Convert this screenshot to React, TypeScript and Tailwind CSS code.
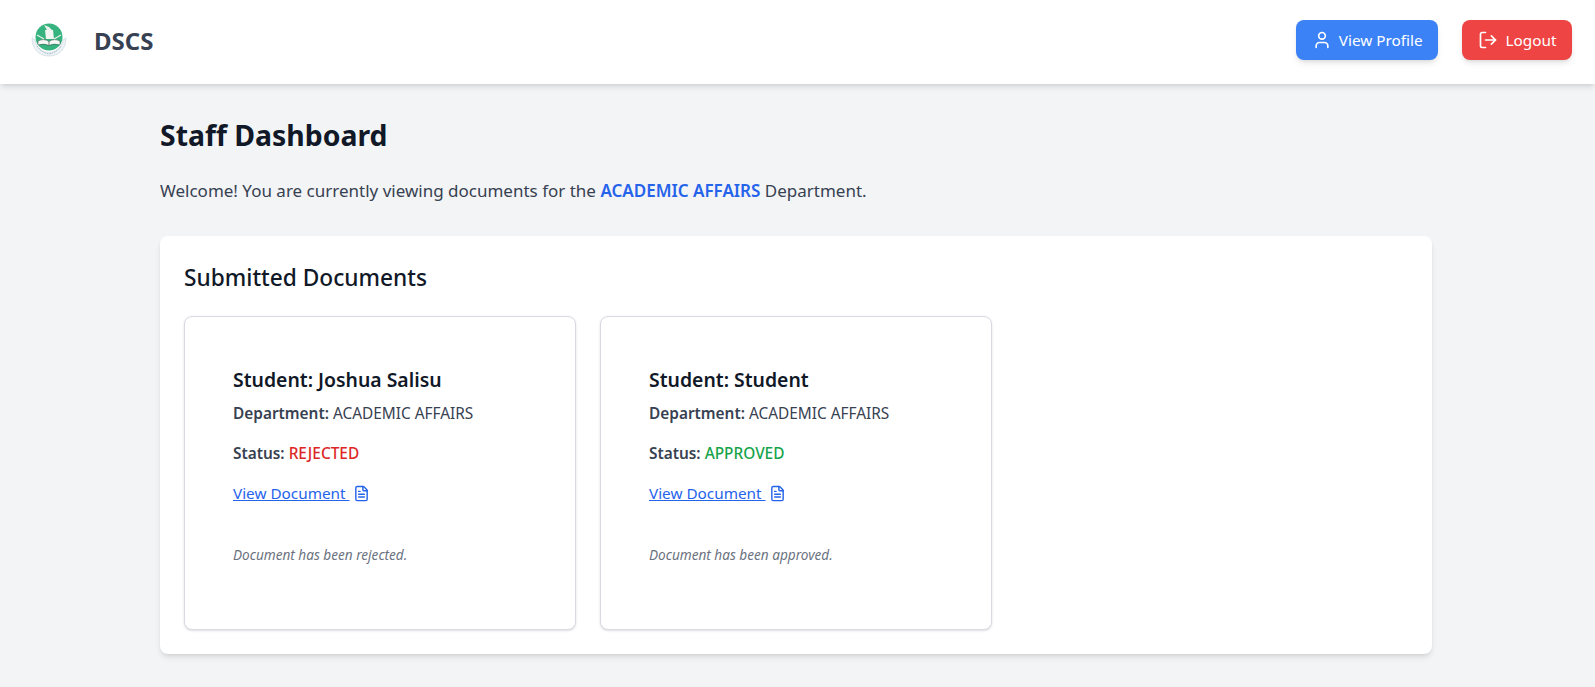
import React from 'react';
import { FileText, LogOut, User } from 'lucide-react';

const Logo = () => (
  <svg width="40" height="40" viewBox="0 0 40 40" className="shrink-0">
    <path d="M4 16 C4 27 11 34 21 34 C31 34 38 27 38 16 L35 18 C34 26 28 30.5 21 30.5 C14 30.5 8 26 7 18 Z" fill="#eef3f6" stroke="#c3d3dc" strokeWidth="0.6" />
    <path d="M9 24 Q14 31 21 32 Q28 31 33 24" fill="none" stroke="#8fa9b8" strokeWidth="0.8" strokeDasharray="1.5 1" />
    <circle cx="21" cy="15" r="13.5" fill="#36b37e" />
    <path d="M16 3 L21 5 L24 8 L19 8 Z" fill="#eef3ee" />
    <path d="M17 8 L25 8 L26 17 L18 17 Z" fill="#f2f5f1" />
    <path d="M10 19 Q16 16 21 19.5 Q26 16 32 19 L32 23 Q26 21 21 23.5 Q16 21 10 23 Z" fill="#f6f8f5" stroke="#2f4f44" strokeWidth="0.5" />
    <path d="M21 19.5 L21 23.5" stroke="#2f4f44" strokeWidth="0.7" />
    <path d="M9 13 L16 17 M33 13 L26 17" stroke="#e8f3ec" strokeWidth="1.2" />
  </svg>
);

const DocCard = ({ name, status, color, note }: { name: string; status: string; color: string; note: string }) => (
  <div className="bg-white border border-[#d8dbe1] rounded-lg shadow-sm px-12 pt-[49px] pb-16">
    <h3 className="text-[19.4px] leading-7 font-semibold text-[#111827]">Student: {name}</h3>
    <p className="mt-2 text-[15.4px] leading-6 text-[#374151]"><strong className="font-semibold">Department:</strong> ACADEMIC AFFAIRS</p>
    <p className="mt-4 text-[15.4px] leading-6 text-[#374151]"><strong className="font-semibold">Status:</strong> <span className={`font-medium ${color}`}>{status}</span></p>
    <a href="#" className="mt-[15px] h-6 flex items-center text-[15.3px] text-[#2563eb]">
      <span className="underline whitespace-pre">View Document </span>
      <FileText size={17} className="ml-[3px] mt-px" />
    </a>
    <p className="mt-10 text-[13.6px] leading-5 italic text-[#6b7280]">{note}</p>
  </div>
);

export default function App() {
  return (
    <div className="font-['Noto_Sans',sans-serif] min-h-screen bg-[#f3f4f6]">
      <header className="bg-white shadow-md h-[84px] flex items-start justify-between pl-[28px] pr-[23px] pt-5">
        <div className="mt-[2px] flex items-center gap-[26px]">
          <Logo />
          <span className="mb-[2px] text-2xl font-bold text-[#374151]">DSCS</span>
        </div>
        <div className="flex items-center gap-6">
          <button className="h-10 flex items-center gap-[7px] px-[15.5px] rounded-lg bg-[#3b82f6] text-white text-[15.3px] shadow-md">
            <User size={20} strokeWidth={2} />
            View Profile
          </button>
          <button className="h-10 flex items-center gap-2 px-[15.5px] rounded-lg bg-[#ef4444] text-white text-[15.3px] shadow-md">
            <LogOut size={20} strokeWidth={2} />
            Logout
          </button>
        </div>
      </header>
      <main className="w-[1272px] ml-[160px] pt-[33px]">
        <h1 className="text-[28.4px] leading-9 font-bold text-[#111827]">Staff Dashboard</h1>
        <p className="mt-6 text-[17px] leading-7 text-[#374151]">
          Welcome! You are currently viewing documents for the <span className="font-semibold text-[#2563eb]">ACADEMIC AFFAIRS</span> Department.
        </p>
        <section className="mt-[31px] bg-white rounded-lg shadow-md p-6">
          <h2 className="pt-[2px] text-[22.7px] leading-8 font-medium text-[#111827]">Submitted Documents</h2>
          <div className="mt-[22px] grid grid-cols-3 gap-6">
            <DocCard name="Joshua Salisu" status="REJECTED" color="text-[#dc2626]" note="Document has been rejected." />
            <DocCard name="Student" status="APPROVED" color="text-[#16a34a]" note="Document has been approved." />
          </div>
        </section>
      </main>
    </div>
  );
}
